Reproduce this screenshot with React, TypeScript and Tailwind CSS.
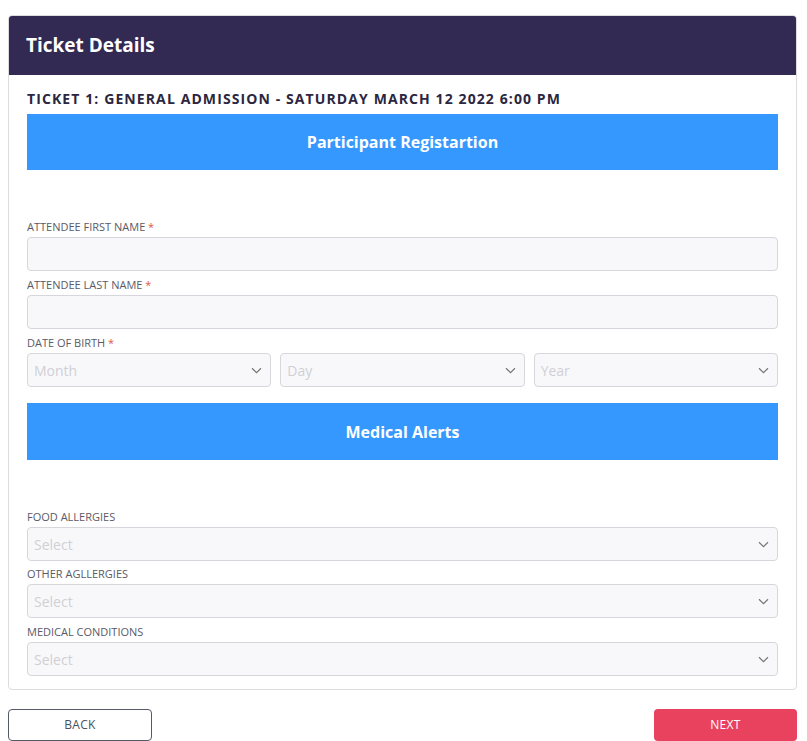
import React from 'react';

const Chevron = () => (
    <svg width="11" height="7" viewBox="0 0 11 7" fill="none" className="shrink-0">
        <path d="M1 1.2 L5.5 5.6 L10 1.2" stroke="#777" strokeWidth="1.2" />
    </svg>
);

const Label = ({ text, required }: { text: string; required?: boolean }) => (
    <div className="text-[11px] leading-[16px] text-[#5a5a66] mb-[2px]">
        {text}
        {required && <span className="text-[#e0574a]"> *</span>}
    </div>
);

const TextInput = () => (
    <div className="h-[34px] w-full rounded-[4px] border border-[#d6d6dc] bg-[#f8f8fb]" />
);

const SelectBox = ({ placeholder }: { placeholder: string }) => (
    <div className="h-[34px] w-full rounded-[4px] border border-[#d6d6dc] bg-[#f8f8fb] flex items-center justify-between pl-[6px] pr-[8px]">
        <span className="text-[14px] text-[#d0d0d4]">{placeholder}</span>
        <Chevron />
    </div>
);

const SectionBar = ({ title, tall }: { title: string; tall?: boolean }) => (
    <div className={`${tall ? 'h-[57px]' : 'h-[56px]'} bg-[#3598fe] flex items-center justify-center text-white font-bold text-[16px]`}>
        {title}
    </div>
);

export default function App() {
    return (
        <div className="min-h-screen bg-white pl-2 pr-[10px] pt-[15px] pb-1" style={{ fontFamily: '"Open Sans", "Noto Sans", sans-serif' }}>
            <div className="rounded-[4px] border border-[#dcdcdf] overflow-hidden">
                <div className="h-[60px] bg-[#322a52] flex items-center px-[18px] -mx-px -mt-px">
                    <h1 className="text-white font-bold text-[19px]">Ticket Details</h1>
                </div>
                <div className="px-[18px] pt-[15px] pb-[13px]">
                    <div className="text-[14px] leading-[18px] font-bold tracking-[1.1px] text-[#2c2640] mb-[6px]">
                        TICKET 1: GENERAL ADMISSION - SATURDAY MARCH 12 2022 6:00 PM
                    </div>
                    <SectionBar title="Participant Registartion" />

                    <div className="mt-[49px] flex flex-col gap-[6px]">
                        <div>
                            <Label text="ATTENDEE FIRST NAME" required />
                            <TextInput />
                        </div>
                        <div>
                            <Label text="ATTENDEE LAST NAME" required />
                            <TextInput />
                        </div>
                        <div>
                            <Label text="DATE OF BIRTH" required />
                            <div className="grid grid-cols-3 gap-[9px]">
                                <SelectBox placeholder="Month" />
                                <SelectBox placeholder="Day" />
                                <SelectBox placeholder="Year" />
                            </div>
                        </div>
                    </div>

                    <div className="mt-[16px]">
                        <SectionBar title="Medical Alerts" tall />
                    </div>

                    <div className="mt-[49px] flex flex-col gap-[5px]">
                        <div>
                            <Label text="FOOD ALLERGIES" />
                            <SelectBox placeholder="Select" />
                        </div>
                        <div>
                            <Label text="OTHER AGLLERGIES" />
                            <SelectBox placeholder="Select" />
                        </div>
                        <div className="mt-px">
                            <Label text="MEDICAL CONDITIONS" />
                            <SelectBox placeholder="Select" />
                        </div>
                    </div>
                </div>
            </div>

            <div className="mt-[19px] flex justify-between">
                <button className="w-[144px] h-[32px] rounded-[4px] border border-[#555a66] bg-white text-[12px] text-[#4a4f5c] tracking-[0.3px]">
                    BACK
                </button>
                <button className="w-[143px] h-[32px] rounded-[4px] bg-[#e8425f] text-[12px] text-white tracking-[0.3px]">
                    NEXT
                </button>
            </div>
        </div>
    );
}
